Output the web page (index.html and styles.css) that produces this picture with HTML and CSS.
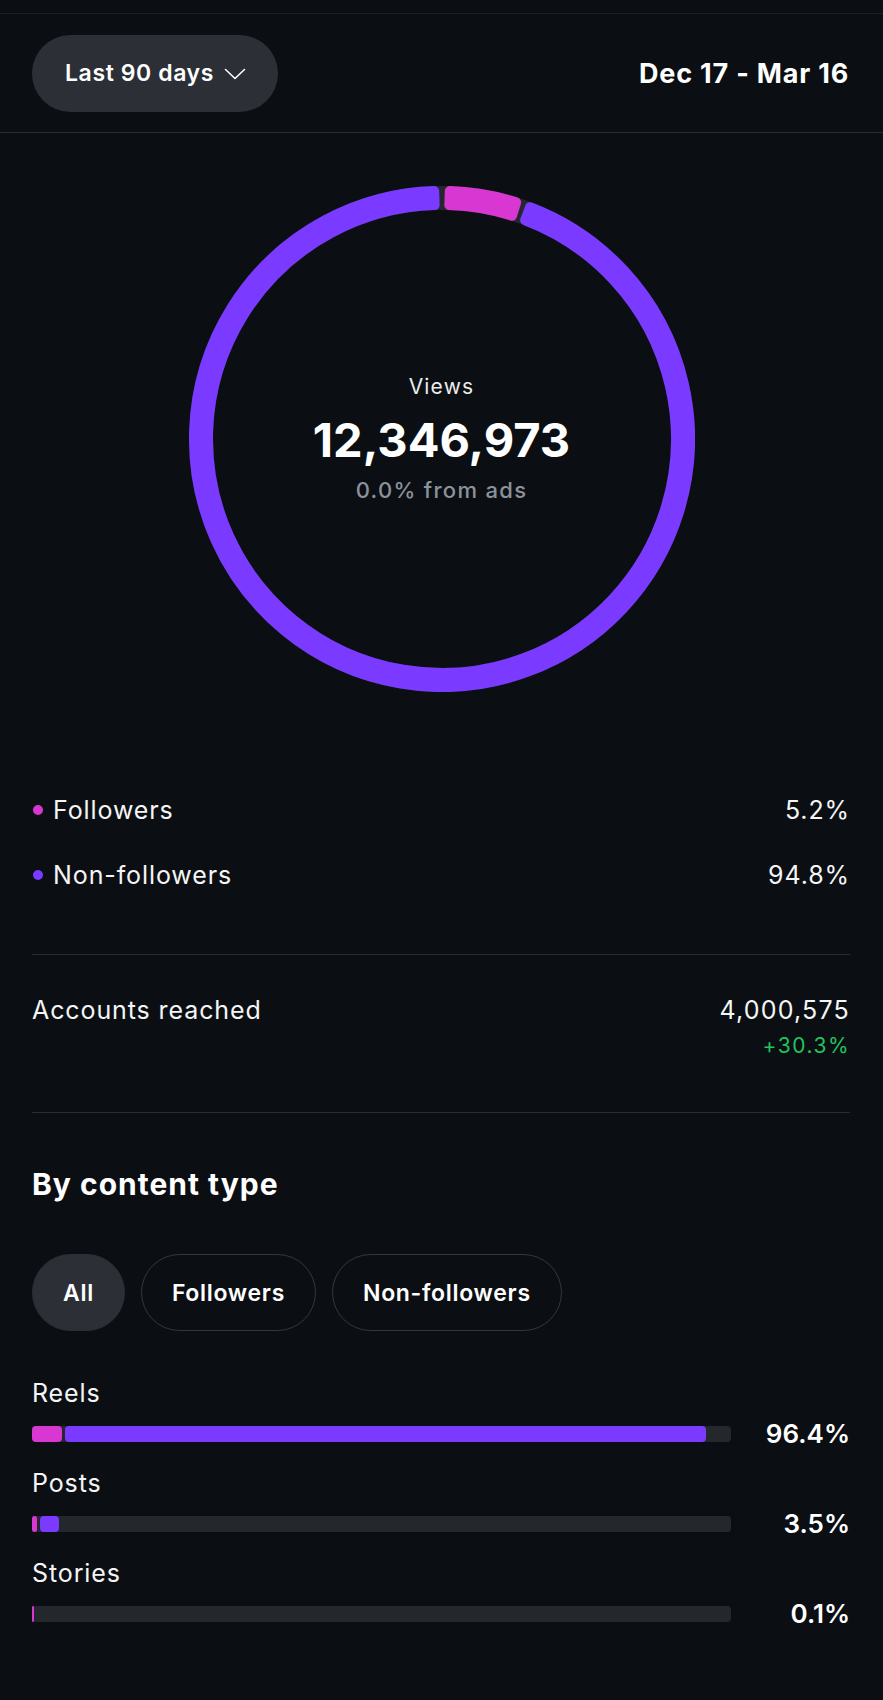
FILE: index.html
```html
<!DOCTYPE html>
<html lang="en">
<head>
    <meta charset="UTF-8">
    <meta name="viewport" content="width=device-width, initial-scale=1.0">
    <title>Views</title>
    <link rel="stylesheet" href="styles.css">
</head>
<body>

    <div class="page">
        <div class="header">
            <button class="range-btn">
                Last 90 days
                <svg class="chevron" width="22" height="12" viewBox="0 0 22 12">
                    <path d="M1.5 1.5 L11 10.5 L20.5 1.5" fill="none" stroke="#fff" stroke-width="1.6" stroke-linecap="round" stroke-linejoin="round"/>
                </svg>
            </button>
            <div class="date-range">Dec 17 - Mar 16</div>
        </div>

        <div class="ring-wrap">
            <svg class="ring" width="506" height="506" viewBox="0 0 506 506">
                <circle cx="253" cy="253" r="241" fill="none" stroke="#24272c" stroke-width="24"/>
                <path d="M260.79 5.12 A248 248 0 0 1 327.16 16.35 L322.98 29.71 A234 234 0 0 0 260.35 19.11 Z"
                      fill="#d937d2" stroke="#d937d2" stroke-width="10" stroke-linejoin="round"/>
                <path d="M341.07 21.16 A248 248 0 1 1 245.21 5.12 L245.65 19.11 A234 234 0 1 0 336.10 34.25 Z"
                      fill="#7a3aff" stroke="#7a3aff" stroke-width="10" stroke-linejoin="round"/>
            </svg>
            <div class="ring-center">
                <div class="ring-label">Views</div>
                <div class="ring-value">12,346,973</div>
                <div class="ring-sub">0.0% from ads</div>
            </div>
        </div>

        <div class="content">
            <div class="legend">
                <div class="legend-row">
                    <span class="legend-name"><span class="dot dot-pink"></span>Followers</span>
                    <span>5.2%</span>
                </div>
                <div class="legend-row">
                    <span class="legend-name"><span class="dot dot-purple"></span>Non-followers</span>
                    <span>94.8%</span>
                </div>
            </div>

            <div class="stat">
                <div class="stat-label">Accounts reached</div>
                <div class="stat-values">
                    <div class="stat-value">4,000,575</div>
                    <div class="stat-change">+30.3%</div>
                </div>
            </div>

            <div class="by-type">
                <h2>By content type</h2>

                <div class="tabs">
                    <button class="tab active">All</button>
                    <button class="tab">Followers</button>
                    <button class="tab">Non-followers</button>
                </div>

                <div class="bars">
                    <div class="bar-item">
                        <div class="bar-label">Reels</div>
                        <div class="bar-row">
                            <div class="track">
                                <div class="fill" style="width: 96.4%;">
                                    <div class="seg seg-pink" style="width: 4.5%;"></div>
                                    <div class="seg seg-purple"></div>
                                </div>
                            </div>
                            <div class="bar-pct">96.4%</div>
                        </div>
                    </div>
                    <div class="bar-item">
                        <div class="bar-label">Posts</div>
                        <div class="bar-row">
                            <div class="track">
                                <div class="fill" style="width: 3.9%;">
                                    <div class="seg seg-pink" style="width: 5px;"></div>
                                    <div class="seg seg-purple"></div>
                                </div>
                            </div>
                            <div class="bar-pct">3.5%</div>
                        </div>
                    </div>
                    <div class="bar-item">
                        <div class="bar-label">Stories</div>
                        <div class="bar-row">
                            <div class="track">
                                <div class="fill" style="width: 2px;">
                                    <div class="seg seg-pink" style="width: 2px;"></div>
                                </div>
                            </div>
                            <div class="bar-pct">0.1%</div>
                        </div>
                    </div>
                </div>
            </div>
        </div>
    </div>

</body>
</html>
```

FILE: styles.css
```css
body {
    font-family: Inter, "Noto Sans", Arial, sans-serif;
    background-color: #0b0f14;
    color: #f5f5f5;
    margin: 0;
    padding: 0;
}
.page {
    padding-top: 13px;
    padding-bottom: 60px;
}
.header {
    display: flex;
    align-items: center;
    justify-content: space-between;
    height: 118px;
    padding: 0 34px 0 32px;
    border-top: 1px solid #1c2026;
    border-bottom: 1px solid #2a2e34;
}
.range-btn {
    display: flex;
    align-items: center;
    height: 77px;
    padding: 0 32px 0 33px;
    background-color: #2c3036;
    color: #fff;
    border: none;
    border-radius: 39px;
    font-family: inherit;
    font-size: 23px;
    letter-spacing: 0.6px;
    font-weight: 600;
    cursor: pointer;
}
.chevron {
    margin-left: 10px;
    margin-top: 2px;
}
.date-range {
    font-size: 27px;
    letter-spacing: 0.8px;
    font-weight: 700;
    color: #fff;
}
.ring-wrap {
    display: grid;
    justify-items: center;
    align-items: center;
    margin-top: 53px;
}
.ring,
.ring-center {
    grid-area: 1 / 1;
}
.ring-center {
    display: flex;
    flex-direction: column;
    align-items: center;
}
.ring-label {
    font-size: 21px;
    letter-spacing: 1.2px;
    line-height: 24px;
    color: #ececec;
    margin-bottom: 14px;
}
.ring-value {
    font-size: 47px;
    line-height: 54px;
    font-weight: 700;
    color: #fff;
    margin-bottom: 10px;
}
.ring-sub {
    font-size: 22px;
    letter-spacing: 1.3px;
    line-height: 26px;
    font-weight: 500;
    color: #8b929b;
}
.content {
    padding: 0 33px 0 32px;
}
.legend {
    margin-top: 103px;
    padding-bottom: 64px;
    display: flex;
    flex-direction: column;
    gap: 35px;
}
.legend-row {
    display: flex;
    justify-content: space-between;
    font-size: 25px;
    letter-spacing: 0.9px;
    line-height: 30px;
}
.legend-name {
    display: flex;
    align-items: center;
}
.dot {
    width: 10px;
    height: 10px;
    border-radius: 50%;
    margin-right: 10px;
    margin-left: 1px;
}
.dot-pink {
    background-color: #d937d2;
}
.dot-purple {
    background-color: #7a3aff;
}
.stat {
    display: flex;
    justify-content: space-between;
    padding: 40px 0 54px;
    border-top: 1px solid #2a2e34;
    border-bottom: 1px solid #2a2e34;
    font-size: 25px;
    letter-spacing: 0.9px;
    line-height: 30px;
}
.stat-values {
    text-align: right;
}
.stat-value {
    letter-spacing: 1.2px;
}
.stat-change {
    font-size: 21px;
    letter-spacing: 1.5px;
    line-height: 25px;
    margin-top: 8px;
    color: #22c25c;
}
.by-type h2 {
    margin: 54px 0 0;
    font-size: 30px;
    letter-spacing: 1px;
    line-height: 34px;
    font-weight: 700;
    color: #fff;
}
.tabs {
    display: flex;
    gap: 16px;
    margin-top: 53px;
}
.tab {
    height: 77px;
    padding: 0 30px;
    border-radius: 39px;
    border: 1.5px solid #34383e;
    background-color: transparent;
    color: #fff;
    font-family: inherit;
    font-size: 23px;
    letter-spacing: 0.7px;
    font-weight: 600;
    cursor: pointer;
}
.tab.active {
    background-color: #2c3036;
    border-color: #2c3036;
}
.bars {
    margin-top: 47px;
}
.bar-item {
    margin-bottom: 26px;
}
.bar-label {
    font-size: 25px;
    letter-spacing: 0.9px;
    line-height: 30px;
    margin-bottom: 18px;
}
.bar-row {
    display: flex;
    align-items: center;
    height: 16px;
}
.track {
    flex: 1;
    height: 16px;
    background-color: #24272c;
    border-radius: 4px;
}
.fill {
    display: flex;
    gap: 3px;
    height: 100%;
}
.seg {
    height: 100%;
    border-radius: 4px;
}
.seg-pink {
    background-color: #d937d2;
    flex-shrink: 0;
}
.seg-purple {
    background-color: #7a3aff;
    flex: 1;
}
.bar-pct {
    width: 119px;
    text-align: right;
    font-size: 26px;
    line-height: 16px;
    font-weight: 600;
    color: #fff;
}
```
